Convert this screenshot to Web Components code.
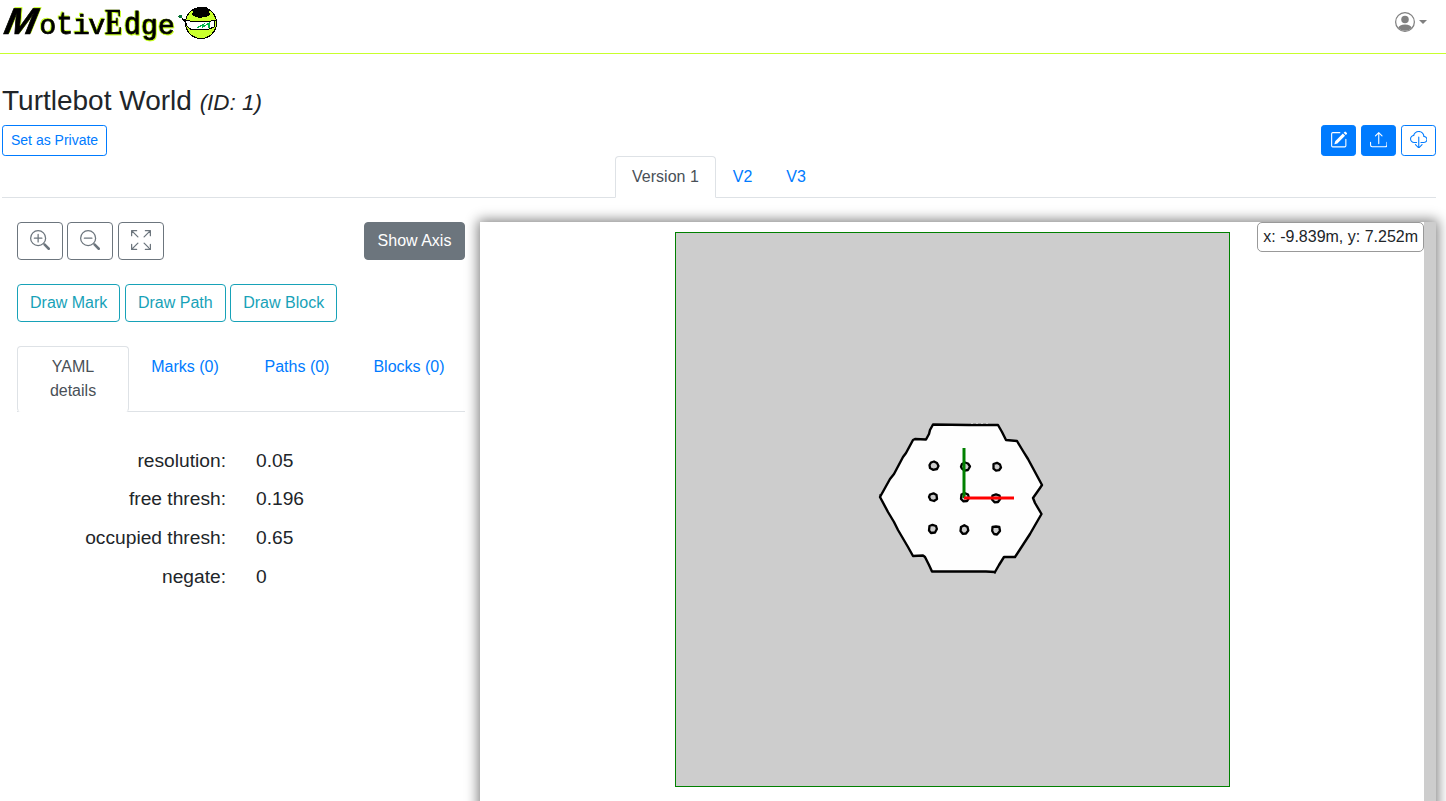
<!DOCTYPE html>
<html lang="en"><head><meta charset="utf-8"><title>Map details</title>
<style>
html,body{margin:0;height:100%;overflow:hidden;background:#fff}
body{font:16px/1.5 "Liberation Sans",Arial,sans-serif;color:#212529}
</style></head><body>
<map-app></map-app>
<script>
const define=(name,html)=>customElements.define(name,class extends HTMLElement{
 constructor(){super();const t=document.createElement('template');t.innerHTML=html;this.attachShadow({mode:'open'}).append(t.content.cloneNode(true));}
});

define('brand-logo',`<style>:host{display:block;width:222px;height:46px}svg{display:block}
text{font-family:"Liberation Mono",monospace;font-size:28px;fill:#000;stroke:#000;stroke-width:.7px}
.m{font:bold 37px "Liberation Sans",sans-serif}.e{font:bold 36px "Liberation Serif",serif;stroke-width:.3px}
.a{filter:drop-shadow(1.200px -1px 0 #c8ff20)}.b{filter:drop-shadow(-1px -1px 0 #c8ff20)}.c{filter:drop-shadow(1px 1px 0 #c8ff20) drop-shadow(-1px 0 0 #c8ff20)}</style>
<svg width="222" height="46" viewBox="0 0 222 46">
<g class="a"><text class="m" transform="translate(1 34) skewX(-22) scale(1.020 1)">M</text></g>
<g class="b"><text x="39.500" y="34">o</text><text transform="translate(56.500 34) scale(1 1.120)">t</text><text x="73" y="34">i</text><text x="88.500" y="34">v</text></g>
<g class="c"><text class="e" transform="translate(105 34) scale(.72 1)">E</text><text transform="translate(124 34) scale(1 1.100)">d</text><text x="141" y="34">g</text><text x="158" y="34">e</text></g>
</svg>`);

define('round-robot',`<style>:host{display:block}svg{display:block}</style>
<svg width="42" height="38" viewBox="176 3 42 38" shape-rendering="crispEdges">
<circle cx="201" cy="23" r="15.500" fill="#caff2d" stroke="#000"/>
<path d="M192 15L194 9L199 7H206L209 10L210 15L206 17H203L200 18L196 17Z" fill="#000"/>
<path d="M185 20L190 21L202 22L215 20.500L214 27L208 29.500H191L187 26Z" fill="#fff" stroke="#000"/>
<path d="M197 28L204 24L203 27L209 23V28" fill="none" stroke="#00b84a" stroke-width="1.300"/>
<path d="M181 17L187 24" stroke="#000"/><circle cx="180.500" cy="16.500" r="2" fill="#087436"/></svg>`);

define('user-menu',`<style>:host{display:flex;align-items:center;color:#808080;gap:4px}i{border:4px solid transparent;border-top-color:#808080;border-bottom:0}svg{display:block}</style>
<svg width="20" height="20" viewBox="0 0 16 16" fill="currentColor"><path d="M13.468 12.370C12.758 11.226 11.195 10 8 10s-4.757 1.225-5.468 2.370A6.987 6.987 0 0 0 8 15a6.987 6.987 0 0 0 5.468-2.630z"/><path fill-rule="evenodd" d="M8 9a3 3 0 1 0 0-6 3 3 0 0 0 0 6z"/><path fill-rule="evenodd" d="M8 1a7 7 0 1 0 0 14A7 7 0 0 0 8 1zM0 8a8 8 0 1 1 16 0A8 8 0 0 1 0 8z"/></svg><i></i>`);

define('app-header',`<style>:host{display:flex;justify-content:space-between;box-sizing:border-box;height:54px;border-bottom:1px solid #c8ff2d}
.brand{display:grid}.brand>*{grid-area:1/1}round-robot{margin:3px 0 0 176px}user-menu{height:44px;margin-right:19px}</style>
<div class="brand"><brand-logo></brand-logo><round-robot></round-robot></div><user-menu></user-menu>`);

define('ui-button',`<style>:host{display:inline-block;--c:#007bff}
button{display:flex;align-items:center;justify-content:center;box-sizing:border-box;margin:0;width:100%;font:16px/24px "Liberation Sans",Arial,sans-serif;height:38px;padding:6px 12px;border:1px solid var(--c);border-radius:4px;color:var(--c);background:transparent;white-space:nowrap}
:host([sm]) button{font-size:14px;line-height:21px;height:31px;padding:4px 8px;border-radius:3.200px}
:host([icon]){width:35px}
:host([solid]) button{background:var(--c);color:#fff}
:host([tone=gray]){--c:#6c757d}:host([tone=info]){--c:#17a2b8}
</style><button><slot></slot></button>`);

const icons={
edit:'<path d="M15.502 1.940a.5.5 0 0 1 0 .706L14.459 3.690l-2-2L13.502.646a.5.5 0 0 1 .707 0l1.293 1.293zm-1.750 2.456l-2-2L4.939 9.210a.5.5 0 0 0-.121.196l-.805 2.414a.25.25 0 0 0 .316.316l2.414-.805a.5.5 0 0 0 .196-.12l6.813-6.814z"/><path fill-rule="evenodd" d="M1 13.500A1.500 1.500 0 0 0 2.500 15h11a1.500 1.500 0 0 0 1.500-1.500v-6a.5.5 0 0 0-1 0v6a.5.5 0 0 1-.5.5h-11a.5.5 0 0 1-.5-.5v-11a.5.5 0 0 1 .5-.5H9a.5.5 0 0 0 0-1H2.500A1.500 1.500 0 0 0 1 2.500v11z"/>',
upload:'<path d="M.5 9.900a.5.5 0 0 1 .5.5v2.500a1 1 0 0 0 1 1h12a1 1 0 0 0 1-1v-2.500a.5.5 0 0 1 1 0v2.500a2 2 0 0 1-2 2H2a2 2 0 0 1-2-2v-2.500a.5.5 0 0 1 .5-.5z"/><path d="M7.646 1.146a.5.5 0 0 1 .708 0l3 3a.5.5 0 0 1-.708.708L8.500 2.707V11.500a.5.5 0 0 1-1 0V2.707L5.354 4.854a.5.5 0 1 1-.708-.708l3-3z"/>',
cloud:'<path d="M4.406 1.342A5.530 5.530 0 0 1 8 0c2.690 0 4.923 2 5.166 4.579C14.758 4.804 16 6.137 16 7.773 16 9.569 14.502 11 12.687 11H10a.5.5 0 0 1 0-1h2.688C13.979 10 15 8.988 15 7.773c0-1.216-1.020-2.228-2.313-2.228h-.5v-.5C12.188 2.825 10.328 1 8 1a4.530 4.530 0 0 0-2.941 1.100c-.757.652-1.153 1.438-1.153 2.055v.448l-.445.049C2.064 4.805 1 5.952 1 7.318 1 8.785 2.230 10 3.781 10H6a.5.5 0 0 1 0 1H3.781C1.708 11 0 9.366 0 7.318c0-1.763 1.266-3.223 2.942-3.593.143-.863.698-1.723 1.464-2.383z"/><path d="M7.646 15.854a.5.5 0 0 0 .708 0l3-3a.5.5 0 0 0-.708-.708L8.500 14.293V5.500a.5.5 0 0 0-1 0v8.793l-2.146-2.147a.5.5 0 0 0-.708.708l3 3z"/>',
plus:'<path fill-rule="evenodd" d="M6.500 12a5.500 5.500 0 1 0 0-11 5.500 5.500 0 0 0 0 11zM13 6.500a6.500 6.500 0 1 1-13 0 6.500 6.500 0 0 1 13 0z"/><path d="M10.344 11.742c.03.04.062.078.098.115l3.850 3.850a1 1 0 0 0 1.415-1.414l-3.850-3.850a1.007 1.007 0 0 0-.115-.1 6.538 6.538 0 0 1-1.398 1.400z"/><path d="M6.500 3a.5.5 0 0 1 .5.5V6h2.500a.5.5 0 0 1 0 1H7v2.500a.5.5 0 0 1-1 0V7H3.500a.5.5 0 0 1 0-1H6V3.500a.5.5 0 0 1 .5-.5z"/>',
minus:'<path fill-rule="evenodd" d="M6.500 12a5.500 5.500 0 1 0 0-11 5.500 5.500 0 0 0 0 11zM13 6.500a6.500 6.500 0 1 1-13 0 6.500 6.500 0 0 1 13 0z"/><path d="M10.344 11.742c.03.04.062.078.098.115l3.850 3.850a1 1 0 0 0 1.415-1.414l-3.850-3.850a1.007 1.007 0 0 0-.115-.1 6.538 6.538 0 0 1-1.398 1.400z"/><path d="M3 6.500a.5.5 0 0 1 .5-.5h6a.5.5 0 0 1 0 1h-6a.5.5 0 0 1-.5-.5z"/>',
full:'<g fill="none" stroke="currentColor" stroke-linecap="round" stroke-linejoin="round"><path d="M5.500 5.500L.5.5M.5 4.500v-4h4M10.500 5.500l5-5M11.500.5h4v4M5.500 10.500l-5 5M.5 11.500v4h4M10.500 10.500l5 5M11.500 15.500h4v-4"/></g>'};
customElements.define('ui-icon',class extends HTMLElement{
 constructor(){super();this.attachShadow({mode:'open'});}
 connectedCallback(){const s=this.getAttribute('size')||20;this.shadowRoot.innerHTML=`<style>:host{display:block;flex:none;width:${s}px;height:${s}px;margin-bottom:2px}svg{display:block}</style><svg width="${s}" height="${s}" viewBox="0 0 16 16" fill="currentColor">${icons[this.getAttribute('name')]}</svg>`;}
});

define('tab-bar',`<style>:host{display:flex;justify-content:center;border-bottom:1px solid #dee2e6}:host([fill]) ::slotted(*){flex:1 1 0;text-align:center}</style><slot></slot>`);
define('tab-item',`<style>:host{display:block;box-sizing:border-box;margin-bottom:-1px;padding:8px 16px;border:1px solid transparent;border-radius:4px 4px 0 0;color:#007bff;line-height:24px}
:host([active]){color:#495057;background:#fff;border-color:#dee2e6 #dee2e6 #fff}:host([round]){border-radius:4px}</style><slot></slot>`);
define('yaml-row',`<style>:host{display:grid;grid-template-columns:209px 1fr;column-gap:30px;font-size:19.200px;line-height:28.800px;margin-bottom:9.950px}.k{text-align:right}</style><span class="k"><slot name="key"></slot></span><span><slot></slot></span>`);

define('tool-panel',`<style>:host{display:block;width:448px}.r{display:flex;gap:4.600px;margin-bottom:24px}.i{gap:4.450px}.push{margin-left:auto;width:101px}.y{padding-top:34.650px}</style>
<div class="r i"><ui-button tone="gray"><ui-icon name="plus"></ui-icon></ui-button><ui-button tone="gray"><ui-icon name="minus"></ui-icon></ui-button><ui-button tone="gray"><ui-icon name="full"></ui-icon></ui-button><ui-button class="push" tone="gray" solid>Show Axis</ui-button></div>
<div class="r"><ui-button tone="info">Draw Mark</ui-button><ui-button tone="info">Draw Path</ui-button><ui-button tone="info">Draw Block</ui-button></div>
<tab-bar fill><tab-item active round>YAML details</tab-item><tab-item>Marks (0)</tab-item><tab-item>Paths (0)</tab-item><tab-item>Blocks (0)</tab-item></tab-bar>
<div class="y"><yaml-row><span slot="key">resolution:</span>0.05</yaml-row><yaml-row><span slot="key">free thresh:</span>0.196</yaml-row><yaml-row><span slot="key">occupied thresh:</span>0.65</yaml-row><yaml-row><span slot="key">negate:</span>0</yaml-row></div>`);

define('occupancy-map',`<style>:host{display:block}svg{display:block}</style>
<svg width="555" height="555" viewBox="675 232 555 555"><rect x="675.500" y="232.500" width="554" height="554" fill="#cdcdcd" stroke="#008000"/>
<path d="M880 497L890 479L894 474L903 457L906 453L913 440L915 439L926 439.500L929 434L930 430L933 424.500L969 425H998L1002 432L1006 440L1017 441L1023 451L1028 459L1042 485L1040 488L1033 498L1035 503L1041.500 514L1034 527L1030 534L1015 557H1004L999 565L995 572L986 571.500H932L929 565L925 557L923 555.500L913 556L908 547L898 530L894 522L888 512Z" fill="#fefefe" stroke="#000" stroke-width="2.400" stroke-linejoin="round"/>
<path d="M971 423.500h17" stroke="#cdcdcd" stroke-width="1.200" stroke-dasharray="2 3"/><path d="M880 494v5M995 571v3" stroke="#000" stroke-dasharray="3 2"/>
<g fill="#cdcdcd" stroke="#000" stroke-width="2.300" stroke-linejoin="round"><path d="M931 462.500l3-1 3 1.500 1.500 3-1.500 3-4 .8-3-1.800-.5-3Z"/><path d="M962 464l3-1.500 3 1 2 3-2 3.500-3.500.7-2.500-2-1-2Z"/><path d="M993.500 464l3.500-1.200 3 1.700 1 3-2 2.700-3 .5-2.500-2Z"/><path d="M930 494.500l3.500-1.200 3 1.700.5 4-3 2-3.500-1-1.500-3Z"/><path d="M961.500 494.500l3-1.500 3.500 1.500 1 3.500-2 3-3.500.3-2.500-2.300Z"/><path d="M992.500 495.500l3.500-1.200 3.500 1.200.7 3.500-2.200 3-3.500.3-2.500-2.800Z"/><path d="M929.500 526l3-1.200 3.500 1.200.9 3-1.900 3.500-4 .5-2-2.500Z"/><path d="M961 527l3.300-1.800 3.200 1.800.8 3.500-2.300 3-3.300.3-2.200-2.800Z"/><path d="M992.500 527l3.500-.5 3.300.5.7 4-3 3.500-3-.5-1.800-3Z"/></g>
<path d="M964 498V448" stroke="#008000" stroke-width="3"/><path d="M964 498H1014" stroke="#f00" stroke-width="3"/></svg>`);

define('map-panel',`<style>:host{display:grid;grid-template-columns:944px 12px;height:700px;background:#fff;box-shadow:0 0 12px 2px #808080}.v{display:grid;grid-template-rows:auto}.v>*{grid-area:1/1}
occupancy-map{margin:10px 0 0 195px}.xy{justify-self:end;align-self:start;box-sizing:border-box;height:30px;border:1px solid #999;border-radius:5px;background:#fff;padding:2px 5px;line-height:24px;z-index:1}.bar{background:#cdcdcd}</style>
<div class="v"><occupancy-map></occupancy-map><div class="xy">x: -9.839m, y: 7.252m</div></div><div class="bar"></div>`);

define('map-app',`<style>:host{display:block;height:100vh;overflow:hidden}main{padding:30px 10px 0 2px}h3{margin:0 0 8px;height:33px;font-size:28px;line-height:33.600px;font-weight:400}small{font-size:22.400px;font-style:italic}
.a{display:flex;gap:5px}.a :first-child{margin-right:auto}.a ui-icon{margin-right:0}.c{display:flex;gap:15px;padding:24px 0 0 15px}map-panel{flex:none}</style>
<app-header></app-header><main><h3>Turtlebot World <small>(ID: 1)</small></h3>
<div class="a"><ui-button sm>Set as Private</ui-button><ui-button sm solid icon><ui-icon name="edit" size="17.500"></ui-icon></ui-button><ui-button sm solid icon><ui-icon name="upload" size="17.500"></ui-icon></ui-button><ui-button sm icon><ui-icon name="cloud" size="17.500"></ui-icon></ui-button></div>
<tab-bar><tab-item active>Version 1</tab-item><tab-item>V2</tab-item><tab-item>V3</tab-item></tab-bar>
<div class="c"><tool-panel></tool-panel><map-panel></map-panel></div></main>`);
</script></body></html>
